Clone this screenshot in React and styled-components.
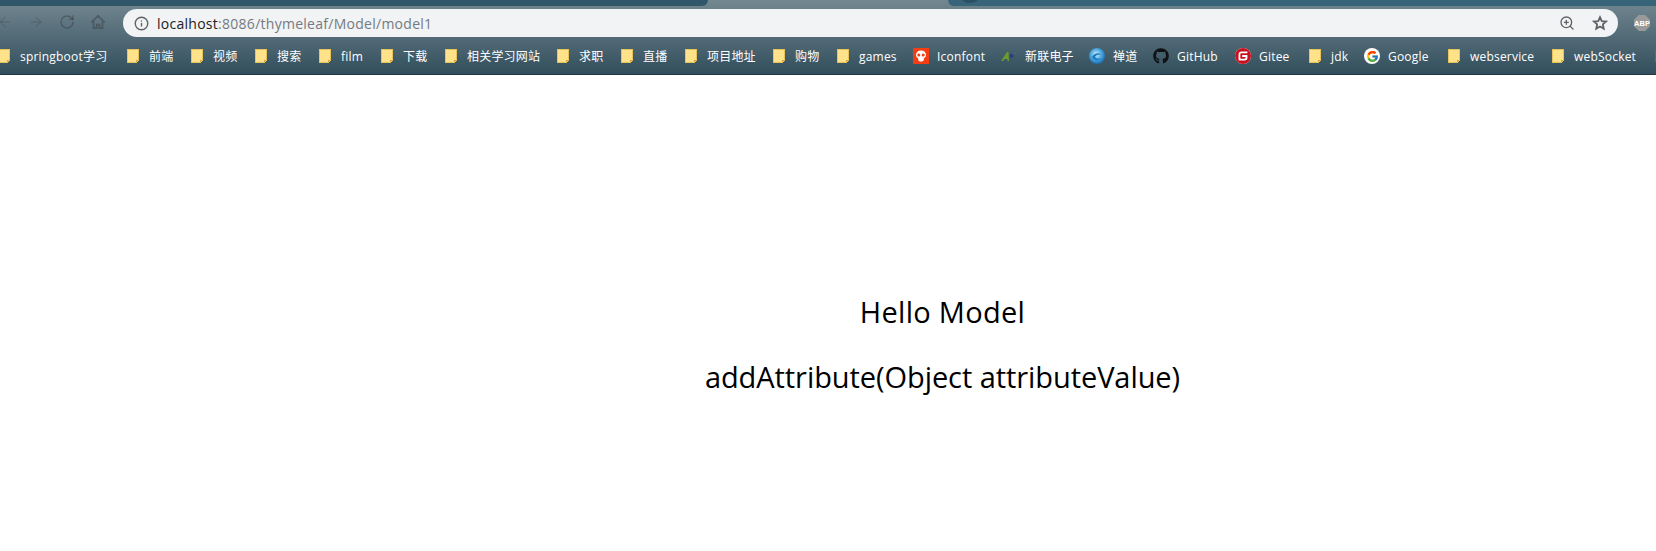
import styled, { createGlobalStyle } from "styled-components";
import { ArrowLeft, ArrowRight, RotateCw, Info, ZoomIn } from "lucide-react";
import { SiGitee } from "react-icons/si";
import { FaGithub } from "react-icons/fa";
import { FcGoogle } from "react-icons/fc";

const GlobalStyle = createGlobalStyle`
  html, body {
    margin: 0;
    height: 100%;
    background: #fff;
    overflow: hidden;
  }
`;

const Page = styled.div`
  width: 1656px;
  height: 551px;
  display: flex;
  flex-direction: column;
  overflow: hidden;
  font-family: "Open Sans", "Noto Sans CJK SC", sans-serif;
`;

const Header = styled.header`
  height: 75px;
  flex-shrink: 0;
  box-sizing: border-box;
  border-bottom: 1px solid #203640;
  background: linear-gradient(180deg, #72878f 0%, #667c87 20%, #4f6874 55%, #324e5c 100%);
`;

const TabStrip = styled.div`
  height: 6px;
  display: flex;
  justify-content: space-between;
`;

const Tab = styled.div`
  position: relative;
  overflow: hidden;
  height: 6px;
  width: ${({ $width }) => $width}px;
  background: ${({ $color }) => $color};
  border-radius: ${({ $right }) => ($right ? "0 0 0 6px" : "0 0 6px 0")};
`;

const TabFavicon = styled.span`
  position: absolute;
  left: 14px;
  top: -6px;
  width: 16px;
  height: 9px;
  border-radius: 50%;
  background: #2a5065;
`;

const Toolbar = styled.div`
  height: 34px;
  display: flex;
  align-items: center;
  padding-bottom: 2px;
  box-sizing: border-box;
`;

const NavButtons = styled.div`
  display: flex;
  align-items: center;
  gap: 15px;
  margin-left: -3px;
  width: 126px;
  flex-shrink: 0;
`;

const NavSlot = styled.span`
  width: 16px;
  height: 16px;
  display: flex;
  align-items: center;
  justify-content: center;
  color: ${({ $dim }) => ($dim ? "rgba(50, 58, 62, 0.22)" : "rgba(50, 54, 58, 0.42)")};
`;

const Omnibox = styled.div`
  width: 1495px;
  height: 28px;
  flex-shrink: 0;
  margin-top: 2px;
  border-radius: 14px;
  background: #f1f3f4;
  display: flex;
  align-items: center;
  padding: 0 10px 0 11px;
  box-sizing: border-box;
`;

const Url = styled.div`
  margin-left: 8px;
  flex: 1;
  font-size: 14px;
  letter-spacing: 0.27px;
  color: #757a80;

  b {
    font-weight: 400;
    color: #202124;
  }
`;

const OmniActions = styled.div`
  display: flex;
  align-items: center;
  gap: 17px;
  color: #5f6368;
`;

const Abp = styled.div`
  width: 16px;
  height: 16px;
  flex-shrink: 0;
  margin-left: 16px;
  margin-top: 2px;
  background: #9a9a9a;
  color: #fff;
  font: 700 7.5px "Liberation Sans", sans-serif;
  display: flex;
  align-items: center;
  justify-content: center;
  clip-path: polygon(30% 0, 70% 0, 100% 30%, 100% 70%, 70% 100%, 30% 100%, 0 70%, 0 30%);
`;

const BookmarkBar = styled.nav`
  height: 34px;
  box-sizing: border-box;
  padding-bottom: 2px;
  display: flex;
  align-items: center;
  margin-left: -4px;
  gap: 16px;
  white-space: nowrap;
`;

const Bookmark = styled.a`
  display: flex;
  align-items: center;
  gap: 8px;
  flex-shrink: 0;
  font-size: 12px;
  letter-spacing: 0.2px;
  color: #fff;
  width: ${({ $width }) => $width}px;
`;

const IconBox = styled.span`
  width: 16px;
  height: 16px;
  flex-shrink: 0;
  display: flex;
  align-items: center;
  justify-content: center;
  border-radius: ${({ $round }) => ($round ? "50%" : "0")};
  background: ${({ $bg }) => $bg || "transparent"};
`;

const Main = styled.main`
  flex: 1;
  display: flex;
  flex-direction: column;
  align-items: center;
  padding: 215px 0 0 229px;
  color: #000;
`;

const Line = styled.p`
  margin: 0 0 21px;
  font-size: 29px;
  line-height: 44px;
  font-family: "Open Sans", sans-serif;
  letter-spacing: ${({ $spacing }) => $spacing}px;
  white-space: nowrap;
`;

const Folder = () => (
  <svg width="16" height="16" viewBox="0 0 16 16" shapeRendering="crispEdges">
    <path d="M2.500 1.500h11v11l-2 2h-9z" fill="#ffe28a" stroke="#e8c35a" />
    <path d="M13 12h-2v2z" fill="#d9a93a" />
  </svg>
);

const Home = () => (
  <svg width="18" height="18" viewBox="0 0 18 18" fill="none" stroke="currentColor" strokeWidth="2">
    <path d="M1.500 9.500 9 2l7.500 7.500M4 8v8h3.500v-4h3v4H14V8" />
  </svg>
);

const SharpStar = () => (
  <svg width="16" height="16" viewBox="0 0 16 16" fill="none" stroke="currentColor" strokeWidth="1.800" strokeLinejoin="miter">
    <path d="M8 2.200l1.750 3.900 4.250.45-3.150 2.850.9 4.200L8 11.450 4.250 13.600l.9-4.200L2 6.550l4.250-.45z" />
  </svg>
);

const IconFont = () => (
  <svg width="16" height="16" viewBox="0 0 16 16">
    <rect width="16" height="16" fill="#f53c12" />
    <path d="M8 2.500c3.200 0 5 2 5 4.400 0 1.700-1 2.800-2.200 3.300v1.800c0 .8-1.400 1.500-2.800 1.500s-2.800-.7-2.800-1.500v-1.800C4 9.700 3 8.600 3 6.900 3 4.500 4.800 2.500 8 2.500z" fill="#fff" />
    <circle cx="5.800" cy="7" r="1.500" fill="#f53c12" />
    <circle cx="10.200" cy="7" r="1.500" fill="#f53c12" />
  </svg>
);

const Xinlian = () => (
  <svg width="16" height="16" viewBox="0 0 16 16">
    <path d="M0 13 6 4h1.500l.5 9H6.500V11H3.500l-1.300 2z" fill="#6f9a2c" />
    <circle cx="10.500" cy="8" r="2" fill="#2c3c80" />
    <circle cx="14.500" cy="5" r="1" fill="#54658c" />
  </svg>
);

const Globe = () => (
  <svg width="16" height="16" viewBox="0 0 16 16">
    <defs>
      <radialGradient id="zentao" cx="45%" cy="40%" r="65%">
        <stop offset="0" stopColor="#d8f0fb" />
        <stop offset="0.55" stopColor="#45a3dc" />
        <stop offset="1" stopColor="#1660a8" />
      </radialGradient>
    </defs>
    <circle cx="8" cy="8" r="8" fill="url(#zentao)" />
    <path d="M3 9c2-4 7-5 10-2-3-1-6 0-7 2 1 2 4 2 6 1-2 3-7 3-9-1z" fill="#1c79bf" />
  </svg>
);

const folder = (label, width) => ({ label, width, icon: <Folder /> });

const bookmarks = [
  folder("springboot学习", 113),
  folder("前端", 48),
  folder("视频", 48),
  folder("搜索", 48),
  folder("film", 46),
  folder("下载", 48),
  folder("相关学习网站", 96),
  folder("求职", 48),
  folder("直播", 48),
  folder("项目地址", 72),
  folder("购物", 48),
  folder("games", 62),
  { label: "Iconfont", width: 72, icon: <IconFont /> },
  { label: "新联电子", width: 72, icon: <Xinlian /> },
  { label: "禅道", width: 48, icon: <Globe /> },
  { label: "GitHub", width: 66, icon: <FaGithub size={16} color="#0f1114" /> },
  { label: "Gitee", width: 56, bg: "#fff", icon: <SiGitee size={16} color="#c8101f" /> },
  folder("jdk", 41),
  { label: "Google", width: 66, bg: "#fff", icon: <FcGoogle size={13} /> },
  folder("webservice", 88),
  folder("webSocket", 87),
  {
    label: "",
    width: 16,
    icon: <svg width="16" height="16" viewBox="0 0 16 16"><rect x="2" y="2" width="12" height="12" fill="#1f74d8" /></svg>,
  },
];

export default function App() {
  return (
    <Page>
      <GlobalStyle />
      <Header>
        <TabStrip>
          <Tab $width={708} $color="#30566a" />
          <Tab $width={708} $color="#38647a" $right>
            <TabFavicon />
          </Tab>
        </TabStrip>
        <Toolbar>
          <NavButtons>
            <NavSlot $dim><ArrowLeft size={18} strokeWidth={2} /></NavSlot>
            <NavSlot $dim><ArrowRight size={18} strokeWidth={2} /></NavSlot>
            <NavSlot><RotateCw size={16} strokeWidth={2.2} /></NavSlot>
            <NavSlot><Home /></NavSlot>
          </NavButtons>
          <Omnibox>
            <Info size={15} strokeWidth={2.2} color="#5f6368" />
            <Url><b>localhost</b>:8086/thymeleaf/Model/model1</Url>
            <OmniActions>
              <ZoomIn size={16} strokeWidth={2} />
              <SharpStar />
            </OmniActions>
          </Omnibox>
          <Abp>ABP</Abp>
        </Toolbar>
        <BookmarkBar>
          {bookmarks.map((item, i) => (
            <Bookmark key={i} $width={item.width}>
              <IconBox $bg={item.bg} $round={!!item.bg}>{item.icon}</IconBox>
              {item.label}
            </Bookmark>
          ))}
        </BookmarkBar>
      </Header>
      <Main>
        <Line $spacing={0.3}>Hello Model</Line>
        <Line $spacing={-0.07}>addAttribute(Object attributeValue)</Line>
      </Main>
    </Page>
  );
}
